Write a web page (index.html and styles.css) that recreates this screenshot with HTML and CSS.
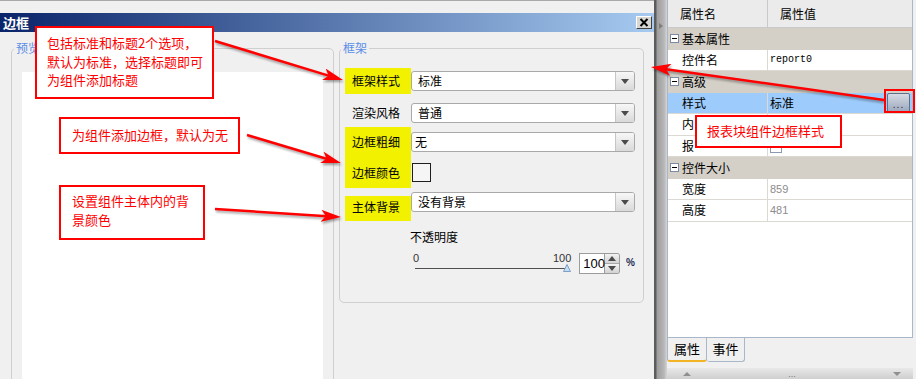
FILE: index.html
```html
<!DOCTYPE html>
<html lang="zh-CN">
<head>
    <meta charset="UTF-8">
    <meta name="viewport" content="width=device-width, initial-scale=1.0">
    <title>边框</title>
    <link rel="stylesheet" href="styles.css">
</head>
<body>
<div class="screen">
    <div class="dialog-col">
        <div class="top-strip"></div>
        <div class="titlebar">
            <span class="title">边框</span>
            <span class="close"><svg width="10" height="9" viewBox="0 0 10 9"><path d="M1.5 1 L8.5 8 M8.5 1 L1.5 8" stroke="#000" stroke-width="2"/></svg></span>
        </div>
        <div class="dialog-body">
            <div class="group preview">
                <div class="legend">预览</div>
                <div class="preview-area"></div>
            </div>
            <div class="group frame">
                <div class="legend">框架</div>

                <div class="row row-1">
                    <div class="lbl hl">框架样式</div>
                    <div class="select"><span class="val">标准</span><span class="btn"><i></i></span></div>
                </div>

                <div class="row row-2">
                    <div class="lbl">渲染风格</div>
                    <div class="select"><span class="val">普通</span><span class="btn"><i></i></span></div>
                </div>

                <div class="row row-3">
                    <div class="lbl hl stack"><span>边框粗细</span><span class="second">边框颜色</span></div>
                    <div class="ctrls">
                        <div class="sub"><div class="select"><span class="val val-tight">无</span><span class="btn"><i></i></span></div></div>
                        <div class="sub sub-2"><div class="swatch"></div></div>
                    </div>
                </div>

                <div class="row row-5">
                    <div class="lbl hl">主体背景</div>
                    <div class="select"><span class="val">没有背景</span><span class="btn"><i></i></span></div>
                </div>

                <div class="opacity">不透明度</div>

                <div class="slider-row">
                    <div class="slider">
                        <div class="ticks"><span>0</span><span>100</span></div>
                        <div class="track"><span class="line"></span><svg class="thumb" width="8" height="8" viewBox="0 0 8 8"><path d="M4 0.5 L7.5 7.5 L0.5 7.5 Z" fill="#c4dcf4" stroke="#7f9fc4"/></svg></div>
                    </div>
                    <div class="spin-input">100</div>
                    <div class="spin">
                        <span class="spin-up"><i></i></span>
                        <span class="spin-down"><i></i></span>
                    </div>
                    <span class="pct">%</span>
                </div>
            </div>
        </div>
    </div>

    <div class="splitter"><i></i></div>

    <div class="props">
        <div class="grid">
            <div class="ph"><span>属性名</span><span>属性值</span></div>
            <div class="pg"><i></i>基本属性</div>
            <div class="pr"><span class="pn">控件名</span><span class="pv mono">report0</span></div>
            <div class="pg"><i></i>高级</div>
            <div class="pr sel"><span class="pn">样式</span><span class="pv">标准<span class="dots">...</span></span></div>
            <div class="pr"><span class="pn">内</span><span class="pv"></span></div>
            <div class="pr"><span class="pn">报</span><span class="pv"><span class="check"></span></span></div>
            <div class="pg"><i></i>控件大小</div>
            <div class="pr"><span class="pn">宽度</span><span class="pv num">859</span></div>
            <div class="pr"><span class="pn">高度</span><span class="pv num">481</span></div>
        </div>
        <div class="tabs">
            <span class="tab active">属性</span>
            <span class="tab">事件</span>
        </div>
        <div class="bar-gap"></div>
        <div class="bottom-bar">
            <i class="tri-up"></i>
            <span class="bar-dots">...</span>
            <i class="tri-down"></i>
        </div>
    </div>

    <!-- callouts drawn over the screenshot -->
    <div class="notes">
        <svg class="arrows" width="916" height="379" viewBox="0 0 916 379">
            <defs>
                <marker id="ah" markerUnits="userSpaceOnUse" markerWidth="20" markerHeight="12" refX="10" refY="6" orient="auto">
                    <path d="M0 0 L20 6 L0 12 L5 6 Z" fill="#ff0000"/>
                </marker>
            </defs>
            <line x1="215" y1="41" x2="333.4" y2="77.1" stroke="#ff0000" stroke-width="2.5" marker-end="url(#ah)"/>
            <line x1="247" y1="135" x2="331.4" y2="160.2" stroke="#ff0000" stroke-width="2.5" marker-end="url(#ah)"/>
            <line x1="215" y1="209" x2="331" y2="216.4" stroke="#ff0000" stroke-width="2.5" marker-end="url(#ah)"/>
            <line x1="884" y1="100" x2="660.9" y2="68.4" stroke="#ff0000" stroke-width="2.5" marker-end="url(#ah)"/>
        </svg>
        <div class="note n1">包括标准和标题2个选项，<br>默认为标准，选择标题即可<br>为组件添加标题</div>
        <div class="note n2">为组件添加边框，默认为无</div>
        <div class="note n3">设置组件主体内的背<br>景颜色</div>
        <div class="note n4">报表块组件边框样式</div>
        <div class="hot"></div>
    </div>
</div>
</body>
</html>
```

FILE: styles.css
```css
* { box-sizing: border-box; }

html, body {
    margin: 0;
    padding: 0;
}

body {
    width: 916px;
    height: 379px;
    overflow: hidden;
    background-color: #f0f0f0;
    font-family: "Noto Sans CJK SC", "Noto Sans", sans-serif;
    font-size: 12px;
    color: #000;
}

.screen {
    position: relative;
    display: flex;
    width: 916px;
    height: 379px;
    overflow: hidden;
}

/* dialog */

.dialog-col {
    width: 654px;
    flex: none;
    display: flex;
    flex-direction: column;
}

.top-strip {
    height: 13px;
    flex: none;
    border-top: 1px solid #a9a9a9;
}

.titlebar {
    height: 19px;
    flex: none;
    display: flex;
    align-items: center;
    justify-content: space-between;
    padding: 0 2px 0 3px;
    background: linear-gradient(to right, #0a246a, #a6caf0);
}

.title {
    color: #fff;
    font-weight: bold;
    font-size: 13px;
    line-height: 19px;
}

.close {
    width: 16px;
    height: 13px;
    display: flex;
    align-items: center;
    justify-content: center;
    background-color: #d8d6d0;
    border: 1px solid;
    border-color: #fff #404040 #404040 #fff;
}

.dialog-body {
    flex: 1;
    display: flex;
    align-items: flex-start;
    gap: 5px;
    padding: 16px 0 0 11px;
}

.group {
    border: 1px solid #cfcfcf;
    border-radius: 5px;
}

.legend {
    width: max-content;
    margin-top: -8px;
    padding: 0 2px;
    line-height: 14px;
    color: #5b8ee6;
    background-color: #f0f0f0;
}

.preview {
    width: 323px;
    height: 340px;
    flex: none;
    padding: 0 10px;
}

.preview .legend { margin-left: -8px; }

.preview-area {
    margin-top: 17px;
    height: 320px;
    background-color: #fff;
}

.frame {
    width: 305px;
    height: 255px;
    flex: none;
    padding: 0 8px 0 5px;
}

.frame .legend { margin-left: -4px; }

.row { display: flex; }

.row-1 { margin-top: 13px; height: 26px; align-items: center; }
.row-2 { margin-top: 9px; height: 20px; align-items: center; }
.row-3 { margin-top: 4px; height: 61px; }
.row-5 { margin-top: 4px; height: 29px; }

.lbl {
    width: 66px;
    flex: none;
    padding-left: 7px;
    line-height: 20px;
}

.row-1 .lbl { height: 26px; line-height: 26px; }

.hl { background-color: #f2f200; }

.stack {
    display: flex;
    flex-direction: column;
}

.stack span { height: 30px; line-height: 30px; }
.stack .second { height: 31px; line-height: 31px; }

.row-5 .lbl {
    align-self: flex-end;
    height: 25px;
    line-height: 21px;
}

.ctrls {
    display: flex;
    flex-direction: column;
}

.sub {
    height: 30px;
    display: flex;
    align-items: center;
}

.sub-2 { height: 31px; }

.select {
    width: 224px;
    height: 20px;
    flex: none;
    display: flex;
    background-color: #fff;
    border: 1px solid #a9a9a9;
    border-radius: 3px;
    overflow: hidden;
}

.row-5 .select { align-self: flex-start; }

.val {
    flex: 1;
    padding-left: 6px;
    line-height: 18px;
}

.val-tight { padding-left: 3px; }

.btn {
    width: 19px;
    display: flex;
    align-items: center;
    justify-content: center;
    border-left: 1px solid #c6c6c6;
    background: linear-gradient(#f7f7f7, #d9d9d9);
}

.btn i {
    width: 0;
    height: 0;
    border-left: 4px solid transparent;
    border-right: 4px solid transparent;
    border-top: 5px solid #4a4a4a;
}

.swatch {
    width: 19px;
    height: 19px;
    margin-left: 1px;
    border: 1px solid #1e1e1e;
    background-color: #f5f5f5;
}

.opacity {
    margin: 8px 0 0 65px;
    line-height: 16px;
}

.slider-row {
    display: flex;
    align-items: flex-start;
    height: 26px;
    margin: 5px 0 0 68px;
}

.slider {
    width: 160px;
    padding-top: 2px;
}

.ticks {
    display: flex;
    justify-content: space-between;
    font-family: "Liberation Sans", sans-serif;
    font-size: 11px;
    line-height: 12px;
    color: #333;
}

.track {
    display: flex;
    align-items: center;
    height: 8px;
    padding-left: 2px;
}

.line {
    flex: 1;
    height: 1px;
    background-color: #505050;
}

.thumb { margin-left: -4px; }

.spin-input {
    width: 26px;
    height: 21px;
    margin: 3px 0 0 8px;
    padding-left: 3px;
    background-color: #fff;
    border: 1px solid #9c9c9c;
    font-family: "Liberation Sans", sans-serif;
    font-size: 13px;
    line-height: 19px;
}

.spin {
    width: 15px;
    height: 21px;
    margin-top: 3px;
    display: flex;
    flex-direction: column;
    border: 1px solid #9c9c9c;
    border-left: none;
    border-radius: 0 3px 3px 0;
    overflow: hidden;
}

.spin span {
    flex: 1;
    display: flex;
    align-items: center;
    justify-content: center;
    background: linear-gradient(#f3f3f3, #d2d2d2);
}

.spin-up { border-bottom: 1px solid #a8a8a8; }

.spin-up i {
    border-left: 4px solid transparent;
    border-right: 4px solid transparent;
    border-bottom: 5px solid #4a4a4a;
}

.spin-down i {
    border-left: 4px solid transparent;
    border-right: 4px solid transparent;
    border-top: 5px solid #4a4a4a;
}

.pct {
    margin: 7px 0 0 6px;
    font-family: "Liberation Sans", sans-serif;
    font-size: 10px;
    font-weight: bold;
    line-height: 12px;
    color: #1f2f55;
}

/* splitter */

.splitter {
    width: 13px;
    flex: none;
    padding: 23px 0 0 5px;
    background: linear-gradient(to right, #5c5c5c 0, #5c5c5c 2px, #9e9e9e 3px, #b6b6b6 10px, #d6d6d6 13px);
}

.splitter i {
    display: block;
    width: 0;
    height: 0;
    border-top: 3px solid transparent;
    border-bottom: 3px solid transparent;
    border-left: 4px solid #7e7e7e;
}

/* property panel */

.props {
    width: 246px;
    flex: none;
    display: flex;
    flex-direction: column;
}

.grid {
    height: 338px;
    flex: none;
    background-color: #fff;
    border: 1px solid #a9b7ca;
    border-top: none;
}

.ph {
    display: grid;
    grid-template-columns: 100px 1fr;
    height: 28px;
    line-height: 27px;
    background-color: #ebebeb;
    border-bottom: 1px solid #c9c9c9;
}

.ph span { padding-left: 12px; }
.ph span:first-child { border-right: 1px solid #c9c9c9; }

.pg {
    height: 21.5px;
    display: flex;
    align-items: center;
    gap: 3px;
    padding-left: 2px;
    background-color: #d4d0c8;
}

.pg i {
    width: 9px;
    height: 9px;
    display: flex;
    align-items: center;
    justify-content: center;
    border: 1px solid #7b8ba6;
    background-color: #fff;
}

.pg i::after {
    content: "";
    width: 5px;
    height: 1px;
    background-color: #000;
}

.pr {
    display: grid;
    grid-template-columns: 100px 1fr;
    height: 21.5px;
    line-height: 20px;
    border-bottom: 1px solid #dcd9d2;
}

.pn {
    padding-left: 14px;
    border-right: 1px solid #dcd9d2;
    white-space: nowrap;
    overflow: hidden;
}

.pv {
    display: flex;
    align-items: center;
    justify-content: space-between;
    padding-left: 2px;
}

.sel { background-color: #9dcbfb; }

.mono {
    font-family: "Liberation Mono", monospace;
    font-size: 10px;
}

.num {
    font-family: "Liberation Sans", sans-serif;
    font-size: 11px;
    color: #8c8c8c;
}

.dots {
    width: 23px;
    height: 20px;
    margin-right: 2px;
    border: 1px solid #5f6f88;
    border-radius: 2px;
    background: linear-gradient(#d6dbe4, #9aa6bb);
    font-family: "Liberation Sans", sans-serif;
    font-size: 10px;
    line-height: 22px;
    text-align: center;
    color: #2a2a40;
    letter-spacing: 1px;
}

.check {
    width: 12px;
    height: 12px;
    margin-top: 2px;
    border: 1px solid #8a9ab0;
    background-color: #fff;
}

.tabs {
    display: flex;
    height: 24px;
    flex: none;
}

.tab {
    width: 38px;
    height: 24px;
    text-align: center;
    font-size: 13px;
    line-height: 22px;
    border-right: 1px solid #a9b7ca;
    border-bottom: 1px solid #a9b7ca;
    border-radius: 0 0 3px 3px;
}

.tab.active {
    width: 40px;
    border-left: 1px solid #a9b7ca;
    border-bottom: 2px solid #f4b324;
}

.bar-gap { height: 6px; flex: none; }

.bottom-bar {
    height: 11px;
    flex: none;
    display: flex;
    align-items: center;
    justify-content: space-between;
    padding: 0 12px 0 16px;
    background: linear-gradient(#e8e8e8, #cfcfcf);
}

.tri-up {
    border-left: 4px solid transparent;
    border-right: 4px solid transparent;
    border-bottom: 4px solid #8f8f8f;
}

.tri-down {
    border-left: 4px solid transparent;
    border-right: 4px solid transparent;
    border-top: 4px solid #8f8f8f;
}

.bar-dots {
    font-family: "Liberation Sans", sans-serif;
    font-size: 9px;
    line-height: 8px;
    color: #7a7a7a;
}

/* callouts */

.notes {
    position: absolute;
    left: 0;
    top: 0;
    width: 916px;
    height: 379px;
    pointer-events: none;
}

.arrows {
    position: absolute;
    left: 0;
    top: 0;
    filter: drop-shadow(1px 2px 1px rgba(0, 0, 0, 0.35));
}

.note {
    position: absolute;
    border: 2px solid #ff0000;
    background-color: #fff;
    color: #ff0000;
    font-size: 13px;
    line-height: 18.5px;
    white-space: nowrap;
}

.n1 { left: 35px; top: 26px; width: 179px; height: 73px; padding: 6px 0 0 10px; }
.n2 { left: 59px; top: 117px; width: 181px; height: 37px; padding: 7px 0 0 11px; }
.n3 { left: 59px; top: 185px; width: 146px; height: 55px; padding: 5px 0 0 11px; }
.n4 { left: 695px; top: 115px; width: 147px; height: 33px; padding: 5px 0 0 10px; }

.hot {
    position: absolute;
    left: 884px;
    top: 89px;
    width: 31px;
    height: 24px;
    border: 2px solid #ff0000;
}
```
